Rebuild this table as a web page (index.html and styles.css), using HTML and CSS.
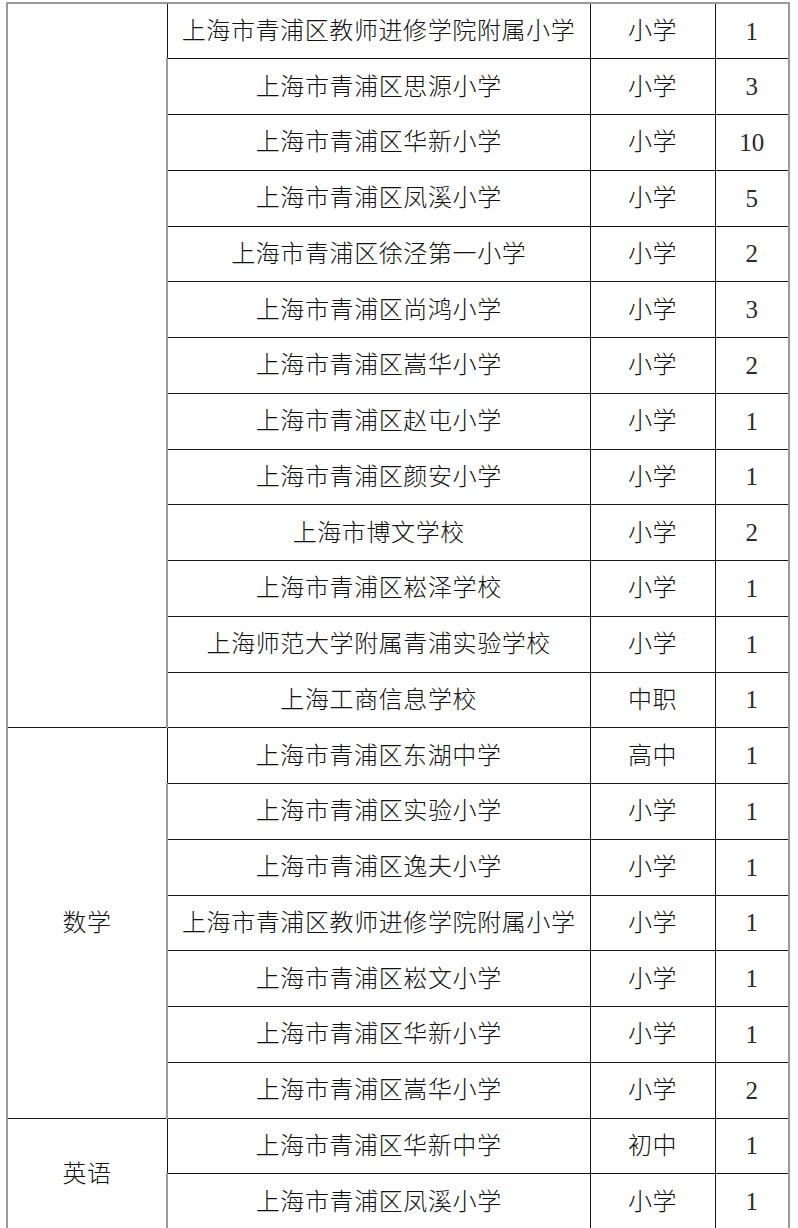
FILE: index.html
```html
<!DOCTYPE html>
<html lang="zh-CN">
<head>
<meta charset="utf-8">
<title>学校岗位表</title>
<link rel="stylesheet" href="styles.css">
</head>
<body>
<table class="grid">
  <colgroup>
    <col class="c-subject">
    <col class="c-school">
    <col class="c-level">
    <col class="c-count">
  </colgroup>
  <tbody>
    <tr><td class="subject" rowspan="13"></td><td>上海市青浦区教师进修学院附属小学</td><td>小学</td><td class="num">1</td></tr>
    <tr><td>上海市青浦区思源小学</td><td>小学</td><td class="num">3</td></tr>
    <tr><td>上海市青浦区华新小学</td><td>小学</td><td class="num">10</td></tr>
    <tr><td>上海市青浦区凤溪小学</td><td>小学</td><td class="num">5</td></tr>
    <tr><td>上海市青浦区徐泾第一小学</td><td>小学</td><td class="num">2</td></tr>
    <tr><td>上海市青浦区尚鸿小学</td><td>小学</td><td class="num">3</td></tr>
    <tr><td>上海市青浦区嵩华小学</td><td>小学</td><td class="num">2</td></tr>
    <tr><td>上海市青浦区赵屯小学</td><td>小学</td><td class="num">1</td></tr>
    <tr><td>上海市青浦区颜安小学</td><td>小学</td><td class="num">1</td></tr>
    <tr><td>上海市博文学校</td><td>小学</td><td class="num">2</td></tr>
    <tr><td>上海市青浦区崧泽学校</td><td>小学</td><td class="num">1</td></tr>
    <tr><td>上海师范大学附属青浦实验学校</td><td>小学</td><td class="num">1</td></tr>
    <tr><td>上海工商信息学校</td><td>中职</td><td class="num">1</td></tr>
    <tr><td class="subject" rowspan="7">数学</td><td>上海市青浦区东湖中学</td><td>高中</td><td class="num">1</td></tr>
    <tr><td>上海市青浦区实验小学</td><td>小学</td><td class="num">1</td></tr>
    <tr><td>上海市青浦区逸夫小学</td><td>小学</td><td class="num">1</td></tr>
    <tr><td>上海市青浦区教师进修学院附属小学</td><td>小学</td><td class="num">1</td></tr>
    <tr><td>上海市青浦区崧文小学</td><td>小学</td><td class="num">1</td></tr>
    <tr><td>上海市青浦区华新小学</td><td>小学</td><td class="num">1</td></tr>
    <tr><td>上海市青浦区嵩华小学</td><td>小学</td><td class="num">2</td></tr>
    <tr><td class="subject" rowspan="2">英语</td><td>上海市青浦区华新中学</td><td>初中</td><td class="num">1</td></tr>
    <tr><td>上海市青浦区凤溪小学</td><td>小学</td><td class="num">1</td></tr>
  </tbody>
</table>
</body>
</html>
```

FILE: styles.css
```css
html, body {
  margin: 0;
  padding: 0;
  background: #ffffff;
}

body {
  font-family: "Liberation Serif", "Noto Sans CJK SC", serif;
  color: #111111;
  overflow: hidden;
}

.grid {
  margin: 2px 0 0 6px;
  width: 782px;
  table-layout: fixed;
  border-collapse: collapse;
  border: 2px solid #9a9a9a;
  border-bottom: none;
}

.c-subject { width: 160px; }
.c-school { width: 423px; }
.c-level { width: 125px; }
.c-count { width: 74px; }

.grid tr {
  height: 55.76px;
}

.grid td {
  border: 1px solid #161616;
  padding: 0;
  text-align: center;
  vertical-align: middle;
  font-size: 24px;
  font-weight: 300;
  letter-spacing: 0.6px;
  line-height: 1;
  white-space: nowrap;
}

.grid td:first-child {
  border-left: 2px solid #9a9a9a;
}

.grid td:last-child {
  border-right: 2px solid #9a9a9a;
}

.grid tr:first-child td {
  border-top: 2px solid #9a9a9a;
}

.grid td.num {
  font-size: 25px;
  letter-spacing: 0;
  color: #2a2a2a;
  border-right: 2px solid #9a9a9a;
}

.grid td.subject {
  border-left: 2px solid #9a9a9a;
}
```
